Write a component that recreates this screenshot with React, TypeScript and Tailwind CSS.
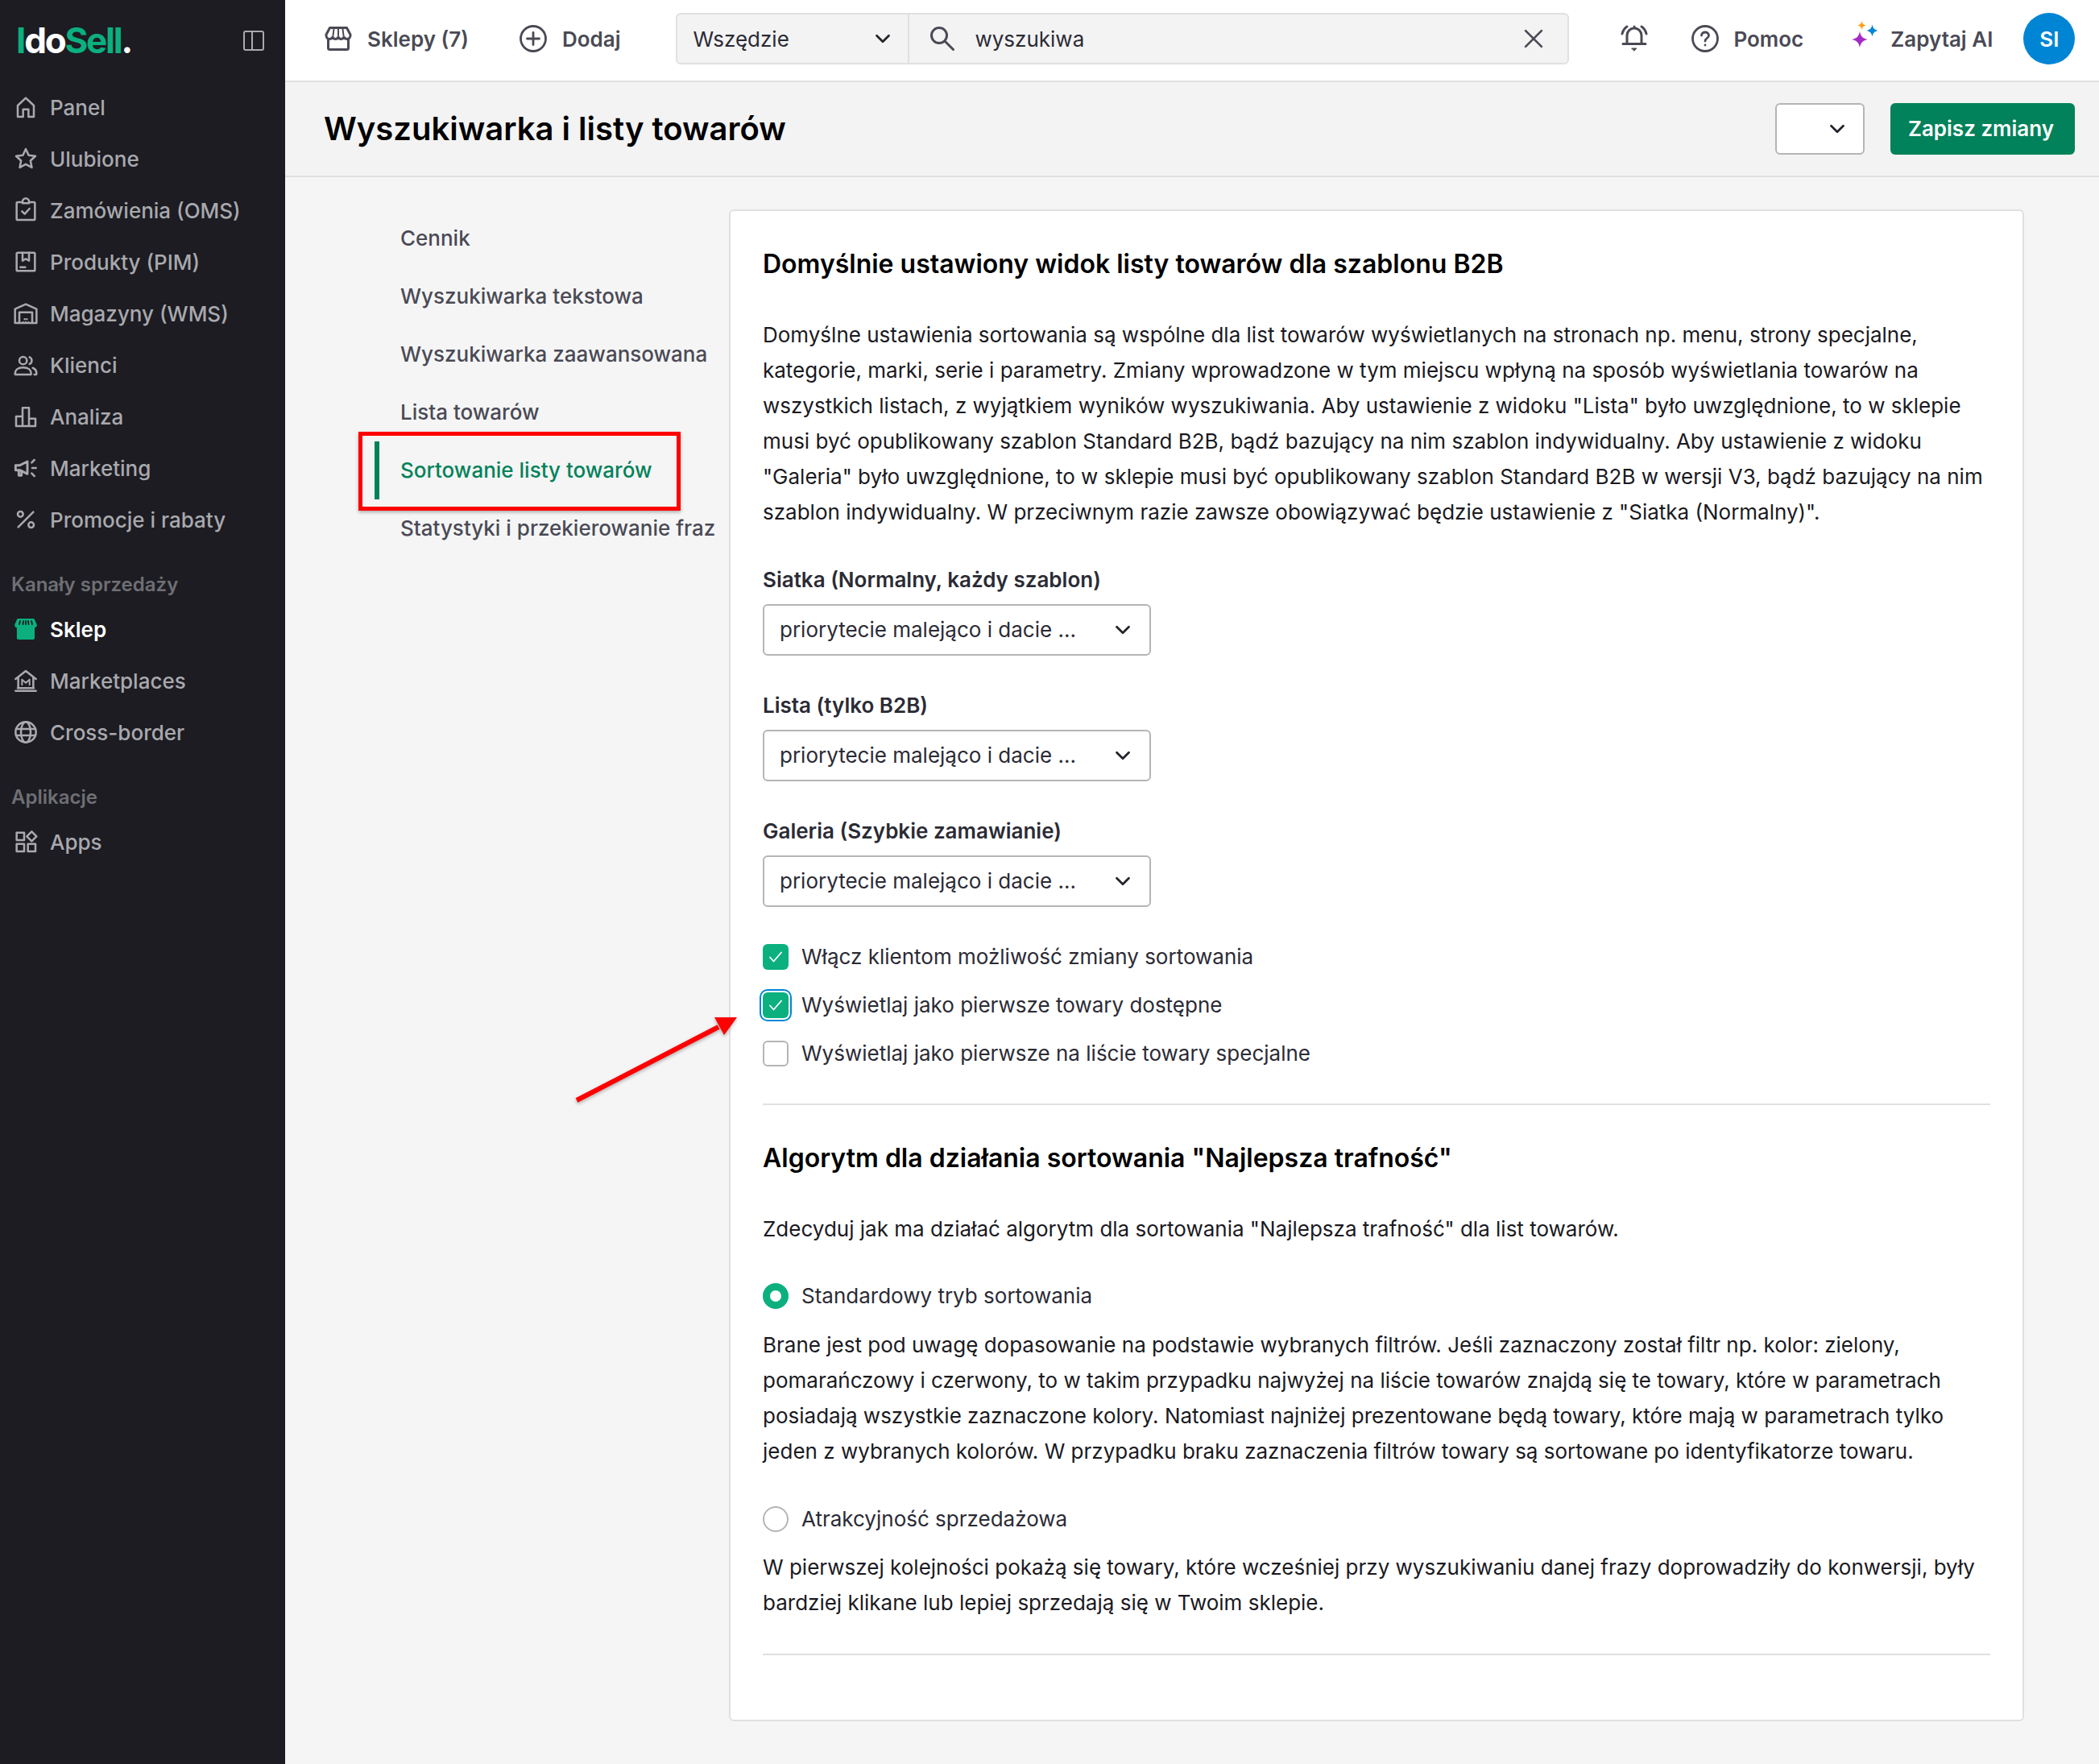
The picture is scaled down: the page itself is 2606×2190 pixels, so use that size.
import type { ReactNode } from "react";

const Ico = ({ children, className = "w-[32px] h-[32px]" }: { children: ReactNode; className?: string }) => (
  <svg viewBox="0 0 24 24" fill="none" stroke="currentColor" strokeWidth="1.9" strokeLinecap="round" strokeLinejoin="round" className={className}>
    {children}
  </svg>
);

const Chevron = ({ className = "w-[30px] h-[30px] text-[#24242c]" }: { className?: string }) => (
  <Ico className={className}>
    <path d="m6 9 6 6 6-6" strokeWidth="2.2" />
  </Ico>
);

const navMain = [
  { label: "Panel", icon: <path d="M4.500 21V10.500L12 3.500l7.500 7V21h-5v-7h-5v7z" /> },
  { label: "Ulubione", icon: <path d="m12 3 2.700 5.800 6.300.8-4.600 4.300 1.200 6.300L12 17.100l-5.600 3.100 1.200-6.300L3 9.600l6.300-.8z" /> },
  { label: "Zamówienia (OMS)", icon: <><path d="M9 4.500H4.500a1 1 0 0 0-1 1V20a1 1 0 0 0 1 1h15a1 1 0 0 0 1-1V5.500a1 1 0 0 0-1-1H15" /><path d="M9 5.500V4a3 3 0 0 1 6 0v1.500z" /><path d="m8.500 13 2.500 2.500 4.500-5" /></> },
  { label: "Produkty (PIM)", icon: <><rect x="3.500" y="3.500" width="17" height="17" rx="1" /><path d="M9 3.500V11l3-1.800 3 1.800V3.500M7 17h4.500" /></> },
  { label: "Magazyny (WMS)", icon: <><path d="M2 21V8l10-4.500L22 8v13z" /><path d="M6 21V11h12v10" /><path d="M11 17.500h.01M13 17.500h.01M9.500 20.500h.01M12 20.500h.01M14.500 20.500h.01" /></> },
  { label: "Klienci", icon: <><circle cx="9.500" cy="8" r="3.500" /><path d="M2 20c0-3 2.500-5.500 7.500-5.500S17 17 17 20c0 .6-.4 1-1 1H3c-.6 0-1-.4-1-1z" /><path d="M15.500 4.800a3.500 3.500 0 0 1 0 6.400M18.500 14.800c2 .8 3.500 2.700 3.500 5.200 0 .6-.4 1-1 1h-1" /></> },
  { label: "Analiza", icon: <path d="M3 21v-9h6v9zM9 21V4h6v17zM15 21v-7h6v7z" /> },
  { label: "Marketing", icon: <><path d="M2.500 9.500v4.500h4l7 3.500V6l-7 3.500z" strokeWidth="2.2" /><path d="M5.500 14.500V19h2.500v-4" strokeWidth="2.2" /><path d="M18 12h3.500M17.500 7l2.500-2.500M17.500 17l2.500 2.500" /></> },
  { label: "Promocje i rabaty", icon: <><path d="M19 5 5 19" /><circle cx="7" cy="7" r="2.500" /><circle cx="17" cy="17" r="2.500" /></> },
];

const Item = ({ label, icon }: { label: string; icon: ReactNode }) => (
  <div className="h-[64px] flex items-center text-[26px] font-medium text-[#a9a9ae]">
    <span className="w-[62px] pl-[16px] shrink-0 flex">
      <Ico>{icon}</Ico>
    </span>
    {label}
  </div>
);

const Section = ({ children }: { children: ReactNode }) => (
  <div className="mt-[25px] h-[47px] flex items-center pl-[14px] text-[24px] font-semibold text-[#6f6f74]">{children}</div>
);

const Select = () => (
  <div className="mt-[8px] w-[482px] h-[64px] border-2 border-[#b5b5b5] rounded-[6px] bg-white flex items-center justify-between pl-[19px] pr-[18px] text-[26px] text-[#2b2b35]">
    priorytecie malejąco i dacie ...
    <Chevron />
  </div>
);

const Check = ({ label, checked, focus }: { label: string; checked?: boolean; focus?: boolean }) => (
  <div className="h-[60px] flex items-center gap-[16px] text-[26px] text-[#2b2b35]">
    <span className={`w-[32px] h-[32px] rounded-[6px] flex items-center justify-center text-white ${checked ? "bg-[#0bb07e]" : "bg-white border-2 border-[#b5b5b5]"} ${focus ? "outline-2 outline-offset-2 outline-[#0085d5]" : ""}`}>
      {checked && (
        <Ico className="w-[24px] h-[24px]">
          <path d="m5 12.500 4.500 5L19 6.500" strokeWidth="1.800" />
        </Ico>
      )}
    </span>
    {label}
  </div>
);

const Radio = ({ label, checked }: { label: string; checked?: boolean }) => (
  <div className="h-[60px] flex items-center gap-[16px] text-[26px] text-[#2b2b35]">
    <span className={`w-[32px] h-[32px] rounded-full bg-white ${checked ? "border-[9px] border-[#0bb07e]" : "border-2 border-[#b5b5b5]"}`} />
    {label}
  </div>
);

const menu = ["Cennik", "Wyszukiwarka tekstowa", "Wyszukiwarka zaawansowana", "Lista towarów", "Sortowanie listy towarów", "Statystyki i przekierowanie fraz"];

const App = () => {
  return (
    <div className="relative min-h-[2190px] flex bg-[#f5f5f5] font-['Inter',sans-serif] overflow-hidden">
      {/* SIDEBAR */}
      <aside className="w-[354px] shrink-0 bg-[#1c1c22]">
        <div className="h-[101px] flex items-center justify-between pl-[20px] pr-[26px]">
          <span className="text-[44px] font-bold tracking-[-2.200px] leading-none pb-[2px]">
            <span className="text-[#0bb07e]">I</span>
            <span className="text-white">do</span>
            <span className="text-[#0bb07e]">Sell</span>
            <span className="text-white">.</span>
          </span>
          <span className="w-[26px] h-[25px] border-2 border-[#a9a9ae] rounded-[3px] flex">
            <span className="w-[10px] border-r-2 border-[#a9a9ae]" />
          </span>
        </div>
        {navMain.map((n) => (
          <Item key={n.label} label={n.label} icon={n.icon} />
        ))}
        <Section>Kanały sprzedaży</Section>
        <div className="h-[64px] flex items-center text-[26px] font-semibold text-white">
          <span className="w-[62px] pl-[18px] shrink-0 flex">
            <svg viewBox="0 0 28 26" className="w-[28px] h-[26px]">
              <path fill="#0bb07e" d="M5 0h18c1 0 1.600.5 2 1.300l2.700 6c.6 2-1 3.700-2.700 3.900V24c0 1-.8 2-2 2H4.900c-1.200 0-2-1-2-2V11.200C1.200 11 -.4 9.300.3 7.300L3 1.300C3.400.5 4 0 5 0z" />
              <path d="M7 3 6 7M11 3l-.5 4M14 3v4M17 3l.5 4M21 3l1 4" stroke="#1c1c22" strokeWidth="1.800" strokeLinecap="round" />
            </svg>
          </span>
          Sklep
        </div>
        <Item
          label="Marketplaces"
          icon={
            <>
              <path d="M2.500 10.500 12 3l9.500 7.500M5 9v10M19 9v10M2.500 21.500h19M4.500 19h15" />
              <path d="M8.500 16v-5l3.500 3 3.500-3v5" strokeWidth="1.500" />
            </>
          }
        />
        <Item
          label="Cross-border"
          icon={
            <>
              <circle cx="12" cy="12" r="9.500" />
              <ellipse cx="12" cy="12" rx="4.500" ry="9.500" />
              <path d="M3 9h18M3 15h18" />
            </>
          }
        />
        <Section>Aplikacje</Section>
        <Item
          label="Apps"
          icon={
            <>
              <rect x="3.500" y="3.500" width="7" height="7" />
              <rect x="3.500" y="14" width="7" height="7" />
              <rect x="14" y="14" width="7" height="7" />
              <path d="m17.500 2.500 4.500 4.500-4.500 4.500L13 7z" />
            </>
          }
        />
      </aside>

      <div className="flex-1 min-w-0 flex flex-col">
        {/* TOPBAR */}
        <header className="h-[102px] bg-white border-b-2 border-[#e0e0e0] flex items-center pl-[49px] pb-[4px] text-[26px] font-semibold text-[#4a4a55]">
          <svg viewBox="0 0 34 30" fill="none" stroke="currentColor" strokeWidth="3" strokeLinecap="round" strokeLinejoin="round" className="w-[34px] h-[30px]">
            <path d="M4.500 16v10.500c0 1 .7 2 2 2h21c1.300 0 2-1 2-2V16" />
            <path d="M6.500 1.500h21L32 10c.5 3-1.500 5.500-4 5.500-1.800 0-3.200-1-4-2.500-.8 1.500-2.200 2.500-3.700 2.500S17.800 14.500 17 13c-.8 1.500-2 2.500-3.500 2.500S10.800 14.500 10 13c-.8 1.500-2.200 2.500-4 2.500-2.500 0-4.500-2.500-4-5.500z" />
            <path d="M11.500 3 10.500 11M17 3v8M22.500 3l1 8" strokeWidth="2" />
          </svg>
          <span className="ml-[19px]">Sklepy (7)</span>
          <svg viewBox="0 0 34 34" fill="none" stroke="currentColor" strokeWidth="2.800" strokeLinecap="round" className="ml-[63px] w-[34px] h-[34px]">
            <circle cx="17" cy="17" r="15.500" />
            <path d="M17 9.500v15M9.500 17h15" />
          </svg>
          <span className="ml-[19px]">Dodaj</span>
          <div className="ml-[69px] w-[1109px] h-[64px] bg-[#f3f3f3] border-2 border-[#e0e0e0] rounded-[6px] flex items-center font-normal text-[#2b2b35]">
            <div className="w-[288px] h-full shrink-0 border-r-2 border-[#e0e0e0] flex items-center justify-between pl-[19px] pr-[16px]">
              Wszędzie
              <Chevron />
            </div>
            <svg viewBox="0 0 30 30" fill="none" stroke="currentColor" strokeWidth="3" strokeLinecap="round" className="ml-[26px] w-[30px] h-[30px] text-[#4a4a55]">
              <circle cx="11" cy="11" r="9.500" />
              <path d="m18 18 10.500 10.500" />
            </svg>
            <span className="ml-[25px]">wyszukiwa</span>
            <span className="ml-auto mr-[25px] flex text-[#4a4a55]">
              <Ico className="w-[34px] h-[34px]">
                <path d="m5 5 14 14M19 5 5 19" />
              </Ico>
            </span>
          </div>
          <svg viewBox="0 0 34 34" fill="none" stroke="currentColor" strokeWidth="3" strokeLinecap="round" strokeLinejoin="round" className="ml-[64px] w-[34px] h-[34px]">
            <path d="M8 23V13a9 9 0 0 1 18 0v10M3 23.500h28M17 2v2" />
            <path d="M8 2C5 4 3 7 2 11M26 2c3 2 5 5 6 9" />
            <path d="M14 29h6l-3 3z" fill="currentColor" strokeWidth="1" />
          </svg>
          <svg viewBox="0 0 34 34" fill="none" stroke="currentColor" strokeWidth="2.800" strokeLinecap="round" className="ml-[54px] w-[34px] h-[34px]">
            <circle cx="17" cy="17" r="15.500" />
            <path d="M12.500 13c0-2.500 2-4 4.500-4s4.500 1.500 4.500 4c0 3.500-4.500 3.500-4.500 7M17 25v.01" />
          </svg>
          <span className="ml-[18px]">Pomoc</span>
          <svg viewBox="0 0 33 33" className="ml-[60px] w-[33px] h-[33px] mb-[12px]">
            <path fill="#a32bc4" d="M10 13c1 6 4 9 10 10-6 1-9 4-10 10-1-6-4-9-10-10 6-1 9-4 10-10z" />
            <path fill="#ff9f1a" d="M12.500 0c.7 3.500 2 4.800 5.500 5.500-3.500.7-4.800 2-5.500 5.500-.7-3.500-2-4.800-5.500-5.500 3.500-.7 4.800-2 5.500-5.500z" />
            <path fill="#0085d5" d="M25.500 4.500c.8 4.500 3 6.700 7.500 7.500-4.500.8-6.700 3-7.500 7.500-.8-4.500-3-6.700-7.500-7.500 4.500-.8 6.700-3 7.500-7.500z" />
          </svg>
          <span className="ml-[15px]">Zapytaj AI</span>
          <span className="ml-[38px] w-[64px] h-[64px] rounded-full bg-[#0085d5] text-white flex items-center justify-center">SI</span>
        </header>

        {/* PAGE HEADER */}
        <div className="h-[118px] bg-[#f3f3f3] border-b-2 border-[#e0e0e0] flex items-center justify-between pl-[48px] pr-[30px]">
          <h1 className="text-[40px] font-semibold text-black">Wyszukiwarka i listy towarów</h1>
          <div className="flex items-center gap-[32px]">
            <div className="w-[111px] h-[64px] bg-white border-2 border-[#b5b5b5] rounded-[6px] flex items-center justify-end pr-[17px]">
              <Chevron />
            </div>
            <button className="w-[229px] h-[64px] rounded-[6px] bg-[#02825a] text-white text-[26px] font-semibold pr-[4px] pb-[2px]">Zapisz zmiany</button>
          </div>
        </div>

        <main className="flex-1 flex items-start">
          {/* LEFT MENU */}
          <nav className="w-[551px] shrink-0 pl-[111px] pt-[40px] text-[26px] font-medium text-[#4a4a55]">
            {menu.map((m) => (
              <div key={m} className={`h-[72px] flex items-center whitespace-nowrap pb-[2px] ${m === "Sortowanie listy towarów" ? "border-l-[6px] border-[#02825a] pl-[26px] text-[#02825a]" : "pl-[32px]"}`}>
                {m}
              </div>
            ))}
          </nav>

          {/* CARD */}
          <section className="mt-[40px] w-[1608px] bg-white border-2 border-[#e0e0e0] rounded-[6px] px-[40px] pt-[44px] pb-[80px] text-[26px] leading-[44px] text-[#1a1a1f]">
            <h2 className="text-[32px] font-semibold text-black">Domyślnie ustawiony widok listy towarów dla szablonu B2B</h2>
            <p className="mt-[44px]">
              Domyślne ustawienia sortowania są wspólne dla list towarów wyświetlanych na stronach np. menu, strony specjalne, kategorie, marki, serie i parametry. Zmiany wprowadzone w tym miejscu wpłyną na sposób wyświetlania towarów na wszystkich listach, z wyjątkiem wyników wyszukiwania. Aby ustawienie z widoku "Lista" było uwzględnione, to w sklepie musi być opublikowany szablon Standard B2B, bądź bazujący na nim szablon indywidualny. Aby ustawienie z widoku "Galeria" było uwzględnione, to w sklepie musi być opublikowany szablon Standard B2B w wersji V3, bądź bazujący na nim szablon indywidualny. W przeciwnym razie zawsze obowiązywać będzie ustawienie z "Siatka (Normalny)".
            </p>
            <div className="mt-[40px] font-semibold text-[#2b2b35]">Siatka (Normalny, każdy szablon)</div>
            <Select />
            <div className="mt-[40px] font-semibold text-[#2b2b35]">Lista (tylko B2B)</div>
            <Select />
            <div className="mt-[40px] font-semibold text-[#2b2b35]">Galeria (Szybkie zamawianie)</div>
            <Select />
            <div className="mt-[32px]">
              <Check checked label="Włącz klientom możliwość zmiany sortowania" />
              <Check checked focus label="Wyświetlaj jako pierwsze towary dostępne" />
              <Check label="Wyświetlaj jako pierwsze na liście towary specjalne" />
            </div>
            <div className="mt-[32px] h-[2px] bg-[#e0e0e0]" />
            <h2 className="mt-[44px] text-[32px] font-semibold text-black">Algorytm dla działania sortowania "Najlepsza trafność"</h2>
            <p className="mt-[44px]">Zdecyduj jak ma działać algorytm dla sortowania "Najlepsza trafność" dla list towarów.</p>
            <div className="mt-[31px]">
              <Radio checked label="Standardowy tryb sortowania" />
            </div>
            <p className="mt-[9px]">
              Brane jest pod uwagę dopasowanie na podstawie wybranych filtrów. Jeśli zaznaczony został filtr np. kolor: zielony, pomarańczowy i czerwony, to w takim przypadku najwyżej na liście towarów znajdą się te towary, które w parametrach posiadają wszystkie zaznaczone kolory. Natomiast najniżej prezentowane będą towary, które mają w parametrach tylko jeden z wybranych kolorów. W przypadku braku zaznaczenia filtrów towary są sortowane po identyfikatorze towaru.
            </p>
            <div className="mt-[32px]">
              <Radio label="Atrakcyjność sprzedażowa" />
            </div>
            <p className="mt-[8px]">
              W pierwszej kolejności pokażą się towary, które wcześniej przy wyszukiwaniu danej frazy doprowadziły do konwersji, były bardziej klikane lub lepiej sprzedają się w Twoim sklepie.
            </p>
            <div className="mt-[41px] h-[2px] bg-[#e0e0e0]" />
          </section>
        </main>
      </div>

      {/* ANNOTATIONS */}
      <div className="absolute left-[445px] top-[536px] w-[400px] h-[98px] border-[5px] border-[#fe0000] shadow-[0_2px_4px_rgba(0,0,0,0.3)]" />
      <svg viewBox="0 0 240 140" className="absolute left-[700px] top-[1240px] w-[240px] h-[140px] drop-shadow-[0_2px_2px_rgba(0,0,0,0.3)]">
        <path d="M16 126 192 35" stroke="#fe0000" strokeWidth="6" />
        <path d="M215 23H187l12 22z" fill="#fe0000" />
      </svg>
    </div>
  );
};

export default App;
